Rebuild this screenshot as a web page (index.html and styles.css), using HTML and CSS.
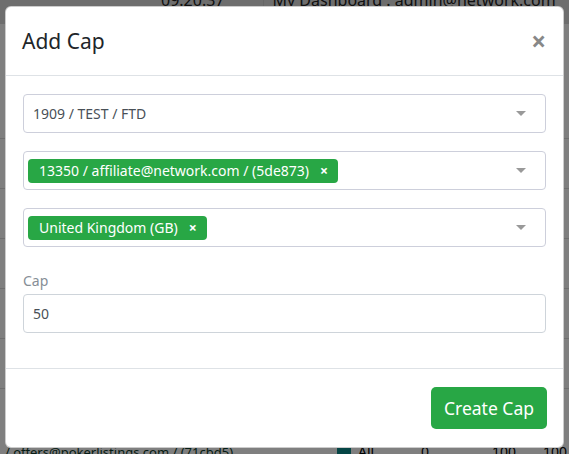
FILE: index.html
```html
<!DOCTYPE html>
<html>
<head>
<meta charset="utf-8">
<link rel="stylesheet" href="styles.css">
</head>
<body>
<div class="page">
  <div class="topbar">
    <span class="time">09:20:37</span>
    <span class="dash">My Dashboard : admin@network.com</span>
  </div>
  <div class="rows">
    <div class="row"></div>
    <div class="row"></div>
    <div class="row"></div>
    <div class="row"></div>
    <div class="row"></div>
    <div class="row"></div>
  </div>
  <div class="bottomrow">
    <span class="b-mail">/ offers@pokerlistings.com / (71cbd5)</span>
    <span class="b-sq"></span>
    <span class="b-all">All</span>
    <span class="b-num">0</span>
    <span class="b-num">100</span>
    <span class="b-num">100</span>
  </div>
</div>
<div class="backdrop"></div>
<div class="modal">
  <div class="modal-header">
    <h5 class="modal-title">Add Cap</h5>
    <span class="close">&times;</span>
  </div>
  <div class="modal-body">
    <div class="select">
      <span class="value">1909 / TEST / FTD</span>
      <span class="caret"></span>
    </div>
    <div class="select multi">
      <span class="tag">13350 / affiliate@network.com / (5de873)<span class="x">&times;</span></span>
      <span class="caret"></span>
    </div>
    <div class="select multi">
      <span class="tag">United Kingdom (GB)<span class="x">&times;</span></span>
      <span class="caret"></span>
    </div>
    <label class="label">Cap</label>
    <div class="input">50</div>
  </div>
  <div class="modal-footer">
    <button class="btn">Create Cap</button>
  </div>
</div>
</body>
</html>
```

FILE: styles.css
```css
* { box-sizing: border-box; }
html, body { margin: 0; padding: 0; }
body {
  width: 569px;
  height: 454px;
  overflow: hidden;
  font-family: "Segoe UI", "Noto Sans", "Open Sans", sans-serif;
  background: #fff;
  position: relative;
}
.page {
  height: 454px;
  display: flex;
  flex-direction: column;
}
.topbar {
  height: 24px;
  background: #dcdcdc;
  display: flex;
  align-items: flex-start;
  font-size: 16px;
  color: #222;
  overflow: hidden;
}
.topbar span { line-height: 10px; transform: translateY(-5px); }
.topbar .time { margin-left: 161px; }
.topbar .dash {
  margin-left: 38px;
  padding-left: 9px;
  border-left: 1px solid #ccc;
  height: 24px;
}
.rows { flex: 1; display: flex; flex-direction: column; padding-top: 114px; }
.row { height: 10px; border-top: 1px solid #ddd; margin-bottom: 40px; }
.bottomrow {
  height: 9px;
  font-size: 14px;
  color: #000;
  display: grid;
  grid-template-columns: 337px 14px 70px 71px 51px 1fr;
  align-items: start;
  overflow: hidden;
}
.bottomrow span { line-height: 10px; transform: translateY(2px); white-space: nowrap; }
.b-mail { padding-left: 5px; color: #0a3a2a; font-size: 13px; }
.b-sq { height: 10px; background: #0a8a8a; }
.b-all { padding-left: 7px; }
.backdrop {
  position: absolute;
  inset: 0;
  background: rgba(0,0,0,0.5);
}
.modal {
  position: absolute;
  left: 5px;
  top: 6px;
  width: 559px;
  height: 442px;
  background: #fff;
  border: 1px solid rgba(0,0,0,0.2);
  border-radius: 6px;
  display: flex;
  flex-direction: column;
}
.modal-header {
  height: 69px;
  display: flex;
  align-items: center;
  justify-content: space-between;
  padding: 0 17px 0 16px;
  border-bottom: 1px solid #dee2e6;
}
.modal-title {
  margin: 0;
  font-size: 21px;
  font-weight: 400;
  color: #212529;
}
.close {
  font-size: 26px;
  font-weight: 700;
  color: #888;
  line-height: 1;
}
.modal-body {
  flex: 1;
  padding: 18px 17px 0 17px;
  display: flex;
  flex-direction: column;
}
.select {
  height: 39px;
  border: 1px solid #cdcfdb;
  border-radius: 4px;
  display: flex;
  align-items: center;
  padding: 0 19px 0 9px;
  margin-bottom: 18px;
  font-size: 14px;
  color: #495057;
}
.select .value { flex: 1; }
.select.multi { padding-left: 4px; }
.select.multi .tag + .caret { margin-left: auto; }
.caret {
  width: 0; height: 0;
  border-left: 5px solid transparent;
  border-right: 5px solid transparent;
  border-top: 5px solid #999;
}
.tag {
  background: #28a745;
  color: #fff;
  border-radius: 4px;
  height: 24px;
  display: inline-flex;
  align-items: center;
  padding: 0 10px 0 11px;
  font-size: 14px;
}
.tag .x {
  font-weight: 700;
  margin-left: 11px;
  font-size: 14px;
}
.label {
  font-size: 14px;
  color: #868e96;
  margin-top: 6px;
  line-height: 20px;
  margin-bottom: 3px;
}
.input {
  height: 39px;
  border: 1px solid #ced4da;
  border-radius: 4px;
  display: flex;
  align-items: center;
  padding-left: 9px;
  font-size: 14px;
  color: #495057;
}
.modal-footer {
  height: 79px;
  border-top: 1px solid #dee2e6;
  display: flex;
  justify-content: flex-end;
  align-items: flex-start;
  padding: 18px 16px 0 0;
}
.btn {
  background: #28a745;
  color: #fff;
  border: none;
  border-radius: 5px;
  height: 42px;
  width: 116px;
  font-family: inherit;
  font-size: 17.5px;
  padding: 0;
}
```
